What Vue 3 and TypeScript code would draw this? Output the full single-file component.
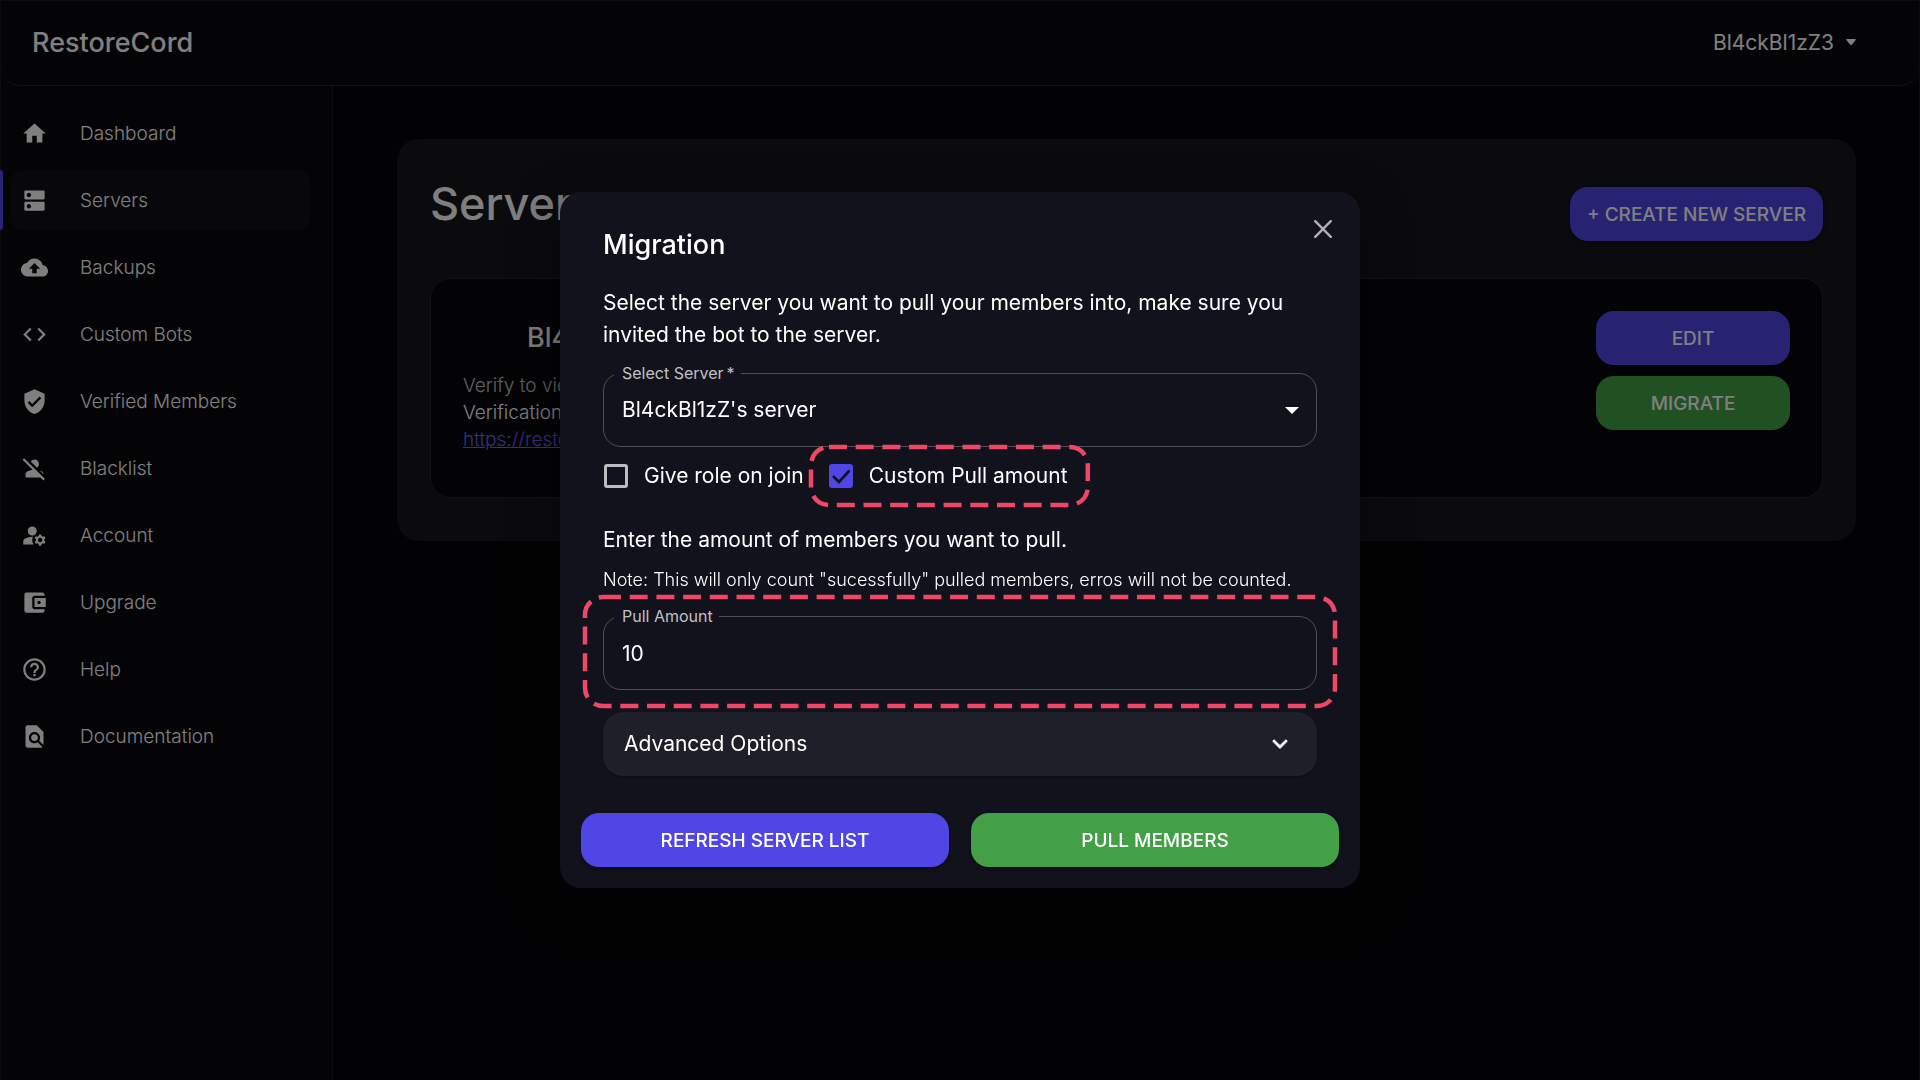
<script setup lang="ts">
import { ref } from 'vue'

interface NavItem {
  label: string
  icon: string
  active?: boolean
}

const navItems: NavItem[] = [
  { label: 'Dashboard', icon: 'M10 20v-6h4v6h5v-8h3L12 3 2 12h3v8z' },
  {
    label: 'Servers',
    active: true,
    icon: 'M20 13H4c-.55 0-1 .45-1 1v6c0 .55.45 1 1 1h16c.55 0 1-.45 1-1v-6c0-.55-.45-1-1-1zM7 19c-1.1 0-2-.9-2-2s.9-2 2-2 2 .9 2 2-.9 2-2 2zM20 3H4c-.55 0-1 .45-1 1v6c0 .55.45 1 1 1h16c.55 0 1-.45 1-1V4c0-.55-.45-1-1-1zM7 9c-1.1 0-2-.9-2-2s.9-2 2-2 2 .9 2 2-.9 2-2 2z',
  },
  {
    label: 'Backups',
    icon: 'M19.35 10.04C18.67 6.59 15.64 4 12 4 9.11 4 6.6 5.64 5.35 8.04 2.34 8.36 0 10.91 0 14c0 3.31 2.69 6 6 6h13c2.76 0 5-2.24 5-5 0-2.64-2.05-4.78-4.65-4.96zM14 13v4h-4v-4H7l5-5 5 5z',
  },
  { label: 'Custom Bots', icon: 'M9.4 16.6 4.8 12l4.6-4.6L8 6l-6 6 6 6zm5.2 0 4.6-4.6-4.6-4.6L16 6l6 6-6 6z' },
  {
    label: 'Verified Members',
    icon: 'M12 1 3 5v6c0 5.55 3.84 10.74 9 12 5.16-1.26 9-6.45 9-12V5zm-2 16-4-4 1.41-1.41L10 14.17l6.59-6.59L18 9z',
  },
  {
    label: 'Blacklist',
    icon: 'M8.65 5.82C9.36 4.72 10.6 4 12 4c2.21 0 4 1.79 4 4 0 1.4-.72 2.64-1.82 3.35zM20 17.17c-.02-1.1-.63-2.11-1.61-2.62-.54-.28-1.13-.54-1.77-.76zm1.19 4.02L2.81 2.81 1.39 4.22l8.89 8.89c-1.81.23-3.39.79-4.67 1.45-1 .51-1.61 1.54-1.61 2.66V20h13.17l2.61 2.61z',
  },
  {
    label: 'Account',
    icon: 'M6 8a4 4 0 1 0 8 0 4 4 0 1 0-8 0zM10.67 13.02c-.22-.01-.44-.02-.67-.02-2.42 0-4.68.67-6.61 1.82-.88.52-1.39 1.5-1.39 2.53V20h9.26c-.79-1.13-1.26-2.51-1.26-4 0-1.07.25-2.07.67-2.98zM20.75 16c0-.22-.03-.42-.06-.63l1.14-1.01-1-1.73-1.45.49c-.32-.27-.68-.48-1.08-.63L18 11h-2l-.3 1.49c-.4.15-.76.36-1.08.63l-1.45-.49-1 1.73 1.14 1.01c-.03.21-.06.41-.06.63s.03.42.06.63l-1.14 1.01 1 1.73 1.45-.49c.32.27.68.48 1.08.63L16 21h2l.3-1.49c.4-.15.76-.36 1.08-.63l1.45.49 1-1.73-1.14-1.01c.03-.21.06-.41.06-.63zM17 18c-1.1 0-2-.9-2-2s.9-2 2-2 2 .9 2 2-.9 2-2 2z',
  },
  {
    label: 'Upgrade',
    icon: 'M21 18v1c0 1.1-.9 2-2 2H5c-1.11 0-2-.9-2-2V5c0-1.1.89-2 2-2h14c1.1 0 2 .9 2 2v1h-9c-1.11 0-2 .9-2 2v8c0 1.1.89 2 2 2zm-9-2h10V8H12zm4-2.5c-.83 0-1.5-.67-1.5-1.5s.67-1.5 1.5-1.5 1.5.67 1.5 1.5-.67 1.5-1.5 1.5z',
  },
  {
    label: 'Help',
    icon: 'M11 18h2v-2h-2zm1-16C6.48 2 2 6.48 2 12s4.48 10 10 10 10-4.48 10-10S17.52 2 12 2zm0 18c-4.41 0-8-3.59-8-8s3.59-8 8-8 8 3.59 8 8-3.59 8-8 8zm0-14c-2.21 0-4 1.79-4 4h2c0-1.1.9-2 2-2s2 .9 2 2c0 2-3 1.75-3 5h2c0-2.25 3-2.5 3-5 0-2.21-1.79-4-4-4z',
  },
  {
    label: 'Documentation',
    icon: 'M20 19.59V8l-6-6H6c-1.1 0-1.99.9-1.99 2L4 20c0 1.1.89 2 1.99 2H18c.45 0 .85-.15 1.19-.4l-4.43-4.43c-.8.52-1.74.83-2.76.83-2.76 0-5-2.24-5-5s2.24-5 5-5 5 2.24 5 5c0 1.02-.31 1.96-.83 2.75zM9 13c0 1.66 1.34 3 3 3s3-1.34 3-3-1.34-3-3-3-3 1.34-3 3z',
  },
]

const server = ref("Bl4ckBl1zZ's server")
const giveRole = ref(false)
const customPull = ref(true)
const pullAmount = ref('10')
</script>

<template>
  <div class="shell">
    <header class="topbar">
      <a class="brand" href="#">RestoreCord</a>
      <button class="user" type="button">
        Bl4ckBl1zZ3
        <svg class="user-caret" viewBox="0 0 10 6" aria-hidden="true">
          <path d="M1 0h8q1 0 .7 1L6 5.400q-1 1-2 0L.3 1Q0 0 1 0z" />
        </svg>
      </button>
    </header>

    <div class="body">
      <nav class="sidebar">
        <a v-for="item in navItems" :key="item.label" href="#" class="nav-item" :class="{ active: item.active }">
          <svg class="nav-icon" viewBox="0 0 24 24" aria-hidden="true"><path :d="item.icon" /></svg>
          <span>{{ item.label }}</span>
        </a>
      </nav>

      <main class="main">
        <section class="panel">
          <div class="panel-head">
            <h1>Servers</h1>
            <button class="btn primary" type="button">+ CREATE NEW SERVER</button>
          </div>
          <article class="server-card">
            <div class="server-info">
              <h2>{{ server }}</h2>
              <p class="muted">Verify to view the server</p>
              <p>Verification URL:</p>
              <p><a class="link" href="#">https://restorecord.com/verify</a></p>
            </div>
            <div class="server-actions">
              <button class="btn primary" type="button">EDIT</button>
              <button class="btn success" type="button">MIGRATE</button>
            </div>
          </article>
        </section>
      </main>
    </div>

    <div class="backdrop">
      <div class="dialog" role="dialog" aria-modal="true" aria-labelledby="dialog-title">
        <button class="close" type="button" aria-label="Close">
          <svg viewBox="0 0 18 18" aria-hidden="true"><path d="M1.200 1.200l15.600 15.600M16.800 1.200L1.200 16.800" /></svg>
        </button>

        <div class="dialog-content">
          <h2 id="dialog-title" class="dialog-title">Migration</h2>
          <p class="lead">
            Select the server you want to pull your members into, make sure you invited the bot to the server.
          </p>

          <div class="field">
            <label for="server">Select Server&thinsp;*</label>
            <select id="server" v-model="server">
              <option>Bl4ckBl1zZ's server</option>
            </select>
            <svg class="select-caret" viewBox="0 0 14 7" aria-hidden="true"><path d="M0 0h14L7 7z" /></svg>
          </div>

          <div class="checks">
            <label class="check">
              <span class="box">
                <input v-model="giveRole" type="checkbox" />
              </span>
              Give role on join
            </label>
            <label class="check">
              <span class="box">
                <input v-model="customPull" type="checkbox" />
                <svg v-if="customPull" viewBox="0 0 24 24" aria-hidden="true"><path d="M4 12l6 6L20.500 6.500" /></svg>
              </span>
              Custom Pull amount
              <span class="highlight around-check">
                <svg aria-hidden="true"><rect width="100%" height="100%" rx="18" /></svg>
              </span>
            </label>
          </div>

          <p class="prompt">Enter the amount of members you want to pull.</p>
          <p class="note">
            Note: This will only count "sucessfully" pulled members, erros will not be counted.
          </p>

          <div class="field">
            <label for="amount">Pull Amount</label>
            <input id="amount" v-model="pullAmount" type="text" inputmode="numeric" />
            <span class="highlight around-field">
              <svg aria-hidden="true"><rect width="100%" height="100%" rx="18" /></svg>
            </span>
          </div>

          <button class="accordion" type="button" aria-expanded="false">
            Advanced Options
            <svg viewBox="0 0 16 10" aria-hidden="true"><path d="M1.200 1.200L8 8l6.800-6.800" /></svg>
          </button>
        </div>

        <div class="dialog-actions">
          <button class="btn primary" type="button">REFRESH SERVER LIST</button>
          <button class="btn success" type="button">PULL MEMBERS</button>
        </div>
      </div>
    </div>
  </div>
</template>

<style>
body {
  margin: 0;
  background: #010103;
}
</style>

<style scoped>
* {
  box-sizing: border-box;
}

.shell {
  min-height: 100vh;
  display: flex;
  flex-direction: column;
  background: #08080c;
  border: 1px solid #17171a;
  border-bottom: 0;
  color: #fff;
  font-family: Inter, "Noto Sans", sans-serif;
  font-size: 19px;
  line-height: 27px;
}

h1,
h2,
p {
  margin: 0;
  font-weight: inherit;
}

a {
  color: inherit;
  text-decoration: none;
}

button,
input,
select {
  font: inherit;
  color: inherit;
}

button {
  cursor: pointer;
}

.topbar {
  height: 85px;
  display: flex;
  align-items: center;
  justify-content: space-between;
  padding: 0 63px 2px 31px;
  border-bottom: 1px solid #242428;
  border-radius: 0 0 20px 20px;
}

.brand {
  font-size: 27px;
  font-weight: 500;
}

.user {
  display: flex;
  align-items: center;
  gap: 12px;
  padding: 0;
  border: 0;
  background: none;
  font-size: 21px;
}

.user-caret {
  width: 10px;
  height: 6px;
  fill: #fff;
}

.body {
  flex: 1;
  display: flex;
}

.sidebar {
  flex: none;
  width: 332px;
  padding: 17px 22px 0 0;
  border-right: 1px solid #1c1c20;
  display: flex;
  flex-direction: column;
  gap: 7px;
}

.nav-item {
  position: relative;
  height: 60px;
  margin-left: 10px;
  padding-left: 10px;
  display: flex;
  align-items: center;
  gap: 32px;
  border-radius: 12px;
  font-weight: 300;
}

.nav-item.active {
  background: #101018;
}

.nav-item.active::before {
  content: "";
  position: absolute;
  left: -11px;
  top: 0;
  bottom: 0;
  width: 3px;
  border-radius: 0 3px 3px 0;
  background: #4f46e5;
}

.nav-icon {
  width: 27px;
  height: 27px;
  fill: #fff;
}

.main {
  flex: 1;
  padding: 53px 63px 53px 64px;
  background: #050508;
}

.panel {
  padding: 33px;
  padding-bottom: 43px;
  border-radius: 22px;
  background: #16161d;
}

.panel-head {
  display: flex;
  justify-content: space-between;
  margin-bottom: 37px;
}

.panel-head .btn {
  margin-top: 15px;
}

h1 {
  font-size: 45px;
  line-height: 64px;
  font-weight: 500;
}

.server-card {
  display: flex;
  justify-content: space-between;
  padding: 32px;
  height: 220px;
  border: 1px solid #242429;
  border-radius: 20px;
  background: #07070d;
}

.server-info {
  font-weight: 300;
}

.server-info h2 {
  margin: 5px 0 13px 64px;
  font-size: 27px;
  line-height: 43px;
  font-weight: 500;
}

.server-info .muted {
  color: #c0c0c4;
}

.link {
  color: #6a62f0;
  text-decoration: underline;
}

.server-actions {
  width: 194px;
  display: flex;
  flex-direction: column;
  gap: 11px;
}

.btn {
  height: 54px;
  padding: 0 17px;
  border: 0;
  border-radius: 18px;
  font-weight: 500;
  box-shadow: 0 2px 4px rgba(0, 0, 0, 0.4);
}

.primary {
  background: #4f46e5;
}

.success {
  background: #43a047;
}

.backdrop {
  position: fixed;
  inset: 0;
  display: flex;
  align-items: center;
  justify-content: center;
  background: rgba(0, 0, 0, 0.5);
}

.dialog {
  position: relative;
  width: 800px;
  padding: 32px 21px 21px;
  border-radius: 21px;
  background: #12121d;
  box-shadow: 0 12px 50px 10px rgba(0, 0, 0, 0.3);
}

.dialog-content {
  padding: 0 22px;
  font-size: 21px;
  line-height: 32px;
}

.close {
  position: absolute;
  top: 16px;
  right: 16px;
  width: 42px;
  height: 42px;
  padding: 12px;
  border: 0;
  background: none;
}

.close svg {
  display: block;
  width: 18px;
  height: 18px;
  stroke: #b0b0b2;
  stroke-width: 2.4;
  stroke-linecap: round;
}

.dialog-title {
  margin-bottom: 21px;
  font-size: 27px;
  line-height: 42px;
  font-weight: 500;
}

.field {
  position: relative;
  margin-top: 22px;
}

.field label {
  position: absolute;
  top: -11px;
  left: 11px;
  padding: 0 6px 0 8px;
  background: #12121d;
  color: #c0c0c4;
  font-size: 16px;
  line-height: 22px;
}

.field select,
.field input {
  display: block;
  width: 100%;
  height: 74px;
  margin: 0;
  padding: 0 18px;
  border: 1px solid #4f4f58;
  border-radius: 18px;
  outline: 0;
  background: none;
  appearance: none;
}

.select-caret {
  position: absolute;
  top: 34px;
  right: 18px;
  width: 14px;
  height: 7px;
  fill: #fff;
  pointer-events: none;
}

.checks {
  display: flex;
  align-items: center;
  gap: 25px;
  height: 57px;
  margin-bottom: 20px;
  padding-left: 1px;
}

.check {
  position: relative;
  display: flex;
  align-items: center;
  gap: 16px;
}

.box {
  position: relative;
  display: block;
  width: 24px;
  height: 24px;
}

.box input {
  display: block;
  width: 24px;
  height: 24px;
  margin: 0;
  border: 3px solid #bcbcc0;
  border-radius: 3px;
  appearance: none;
}

.box input:checked {
  border-color: #4f46e5;
  background: #4f46e5;
}

.box svg {
  position: absolute;
  inset: 0;
  fill: none;
  stroke: #12121d;
  stroke-width: 2.6;
  pointer-events: none;
}

.highlight {
  position: absolute;
  pointer-events: none;
}

.highlight svg {
  display: block;
  width: 100%;
  height: 100%;
  overflow: visible;
}

.highlight rect {
  fill: none;
  stroke: #ef4765;
  stroke-width: 4.5;
  stroke-dasharray: 18 8.7;
}

.around-check {
  inset: -13px -20px -13px -18px;
}

.around-field {
  inset: -19px -18px -16px -18px;
}

.note {
  margin-top: 10px;
  font-size: 18px;
  line-height: 28px;
  font-weight: 300;
}

.accordion {
  width: 100%;
  height: 64px;
  margin-top: 22px;
  padding: 0 29px 0 21px;
  display: flex;
  align-items: center;
  justify-content: space-between;
  border: 0;
  border-radius: 20px;
  background: #1f1f29;
  box-shadow: 0 2px 2px rgba(0, 0, 0, 0.25);
}

.accordion svg {
  width: 16px;
  height: 10px;
  fill: none;
  stroke: #fff;
  stroke-width: 2.7;
}

.dialog-actions {
  display: grid;
  grid-template-columns: 1fr 1fr;
  gap: 22px;
  margin-top: 37px;
}
</style>
